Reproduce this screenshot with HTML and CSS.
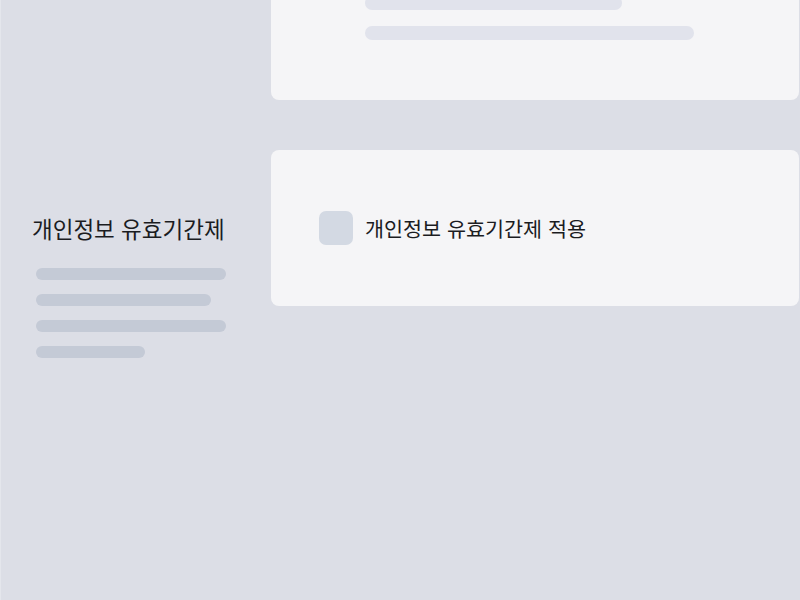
FILE: index.html
```html
<!DOCTYPE html>
<html lang="ko">
<head>
<meta charset="utf-8">
<link rel="stylesheet" href="styles.css">
</head>
<body>
<div class="page">
  <div class="row row-top">
    <div class="side"></div>
    <div class="card card-top">
      <div class="bar bar-a"></div>
      <div class="bar bar-b"></div>
    </div>
  </div>
  <div class="row row-main">
    <div class="side">
      <div class="side-title">개인정보 유효기간제</div>
      <div class="side-bars">
        <div class="sbar w190"></div>
        <div class="sbar w175"></div>
        <div class="sbar w190"></div>
        <div class="sbar w109"></div>
      </div>
    </div>
    <div class="card card-main">
      <div class="check"></div>
      <div class="check-label">개인정보 유효기간제 적용</div>
    </div>
  </div>
</div>
</body>
</html>
```
FILE: styles.css
```css
html, body {
  margin: 0;
  padding: 0;
  background: #dcdee6;
  overflow: hidden;
  width: 800px;
  height: 600px;
}
body {
  font-family: "Noto Sans CJK KR", "Noto Sans", sans-serif;
  color: #1b1c1f;
  border-left: 1px solid #e4e6ec;
  box-sizing: border-box;
}
.page {
  display: flex;
  flex-direction: column;
  gap: 50px;
  margin-top: -100px;
}
.row {
  display: grid;
  grid-template-columns: 270px 528px;
}
.card {
  background: #f5f5f7;
  border-radius: 8px;
}
.card-top {
  height: 200px;
  box-sizing: border-box;
  padding: 96px 0 0 94px;
  display: flex;
  flex-direction: column;
  gap: 16px;
}
.bar {
  height: 14px;
  border-radius: 7px;
  background: #e1e3ec;
}
.bar-a { width: 257px; }
.bar-b { width: 329px; }
.card-main {
  height: 156px;
  display: flex;
  align-items: center;
  padding-left: 48px;
  gap: 12px;
}
.check {
  width: 34px;
  height: 34px;
  border-radius: 7px;
  background: #d3d9e3;
}
.check-label {
  font-size: 20.7px;
  line-height: 28px;
  margin-top: -1px;
}
.side {
  padding-left: 31px;
}
.row-main .side {
  padding-top: 63px;
}
.side-title {
  font-size: 22.5px;
  line-height: 30px;
}
.side-bars {
  margin-top: 25px;
  margin-left: 4px;
  display: flex;
  flex-direction: column;
  gap: 14px;
}
.sbar {
  height: 12px;
  border-radius: 6px;
  background: #c4cad6;
}
.w190 { width: 190px; }
.w175 { width: 175px; }
.w109 { width: 109px; }
```
